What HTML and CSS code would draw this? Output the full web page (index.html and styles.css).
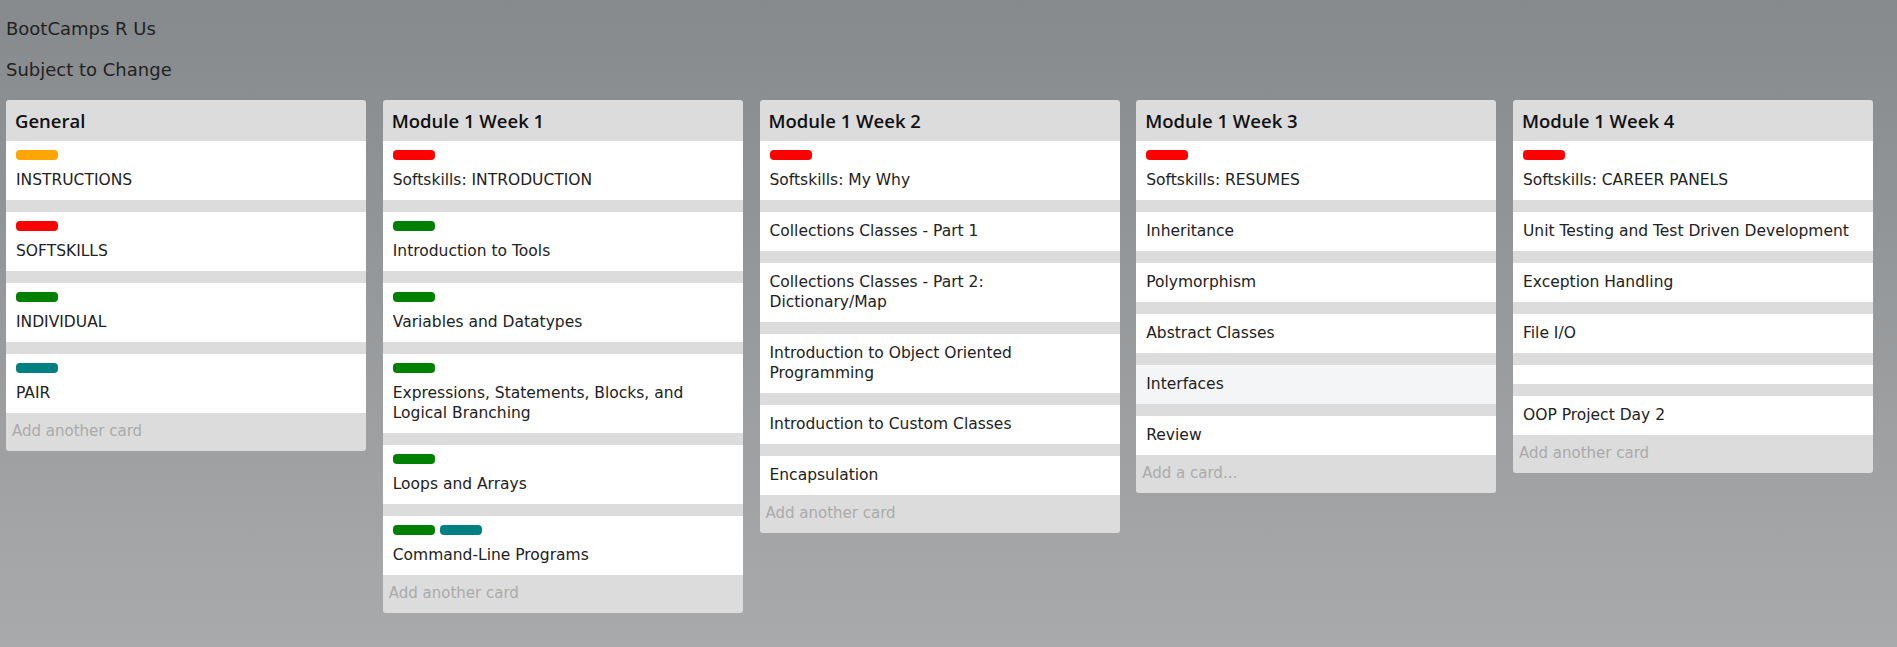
FILE: index.html
```html
<!DOCTYPE html>
<html>
<head>
<meta charset="utf-8">
<title>BootCamps R Us</title>
<link rel="stylesheet" href="styles.css">
</head>
<body>
<div class="page">
  <div class="board-title">BootCamps R Us</div>
  <div class="board-sub">Subject to Change</div>
  <div class="lists">
    <section class="list">
      <h2 class="list-head">General</h2>
      <div class="cards">
        <div class="card"><div class="labels"><span class="label orange"></span></div><div class="card-text">INSTRUCTIONS</div></div>
        <div class="card"><div class="labels"><span class="label red"></span></div><div class="card-text">SOFTSKILLS</div></div>
        <div class="card"><div class="labels"><span class="label green"></span></div><div class="card-text">INDIVIDUAL</div></div>
        <div class="card"><div class="labels"><span class="label teal"></span></div><div class="card-text">PAIR</div></div>
      </div>
      <div class="add">Add another card</div>
    </section>
    <section class="list">
      <h2 class="list-head">Module 1 Week 1</h2>
      <div class="cards">
        <div class="card"><div class="labels"><span class="label red"></span></div><div class="card-text">Softskills: INTRODUCTION</div></div>
        <div class="card"><div class="labels"><span class="label green"></span></div><div class="card-text">Introduction to Tools</div></div>
        <div class="card"><div class="labels"><span class="label green"></span></div><div class="card-text">Variables and Datatypes</div></div>
        <div class="card"><div class="labels"><span class="label green"></span></div><div class="card-text">Expressions, Statements, Blocks, and Logical Branching</div></div>
        <div class="card"><div class="labels"><span class="label green"></span></div><div class="card-text">Loops and Arrays</div></div>
        <div class="card"><div class="labels"><span class="label green"></span><span class="label teal"></span></div><div class="card-text">Command-Line Programs</div></div>
      </div>
      <div class="add">Add another card</div>
    </section>
    <section class="list">
      <h2 class="list-head">Module 1 Week 2</h2>
      <div class="cards">
        <div class="card"><div class="labels"><span class="label red"></span></div><div class="card-text">Softskills: My Why</div></div>
        <div class="card"><div class="card-text">Collections Classes - Part 1</div></div>
        <div class="card"><div class="card-text">Collections Classes - Part 2: Dictionary/Map</div></div>
        <div class="card"><div class="card-text">Introduction to Object Oriented Programming</div></div>
        <div class="card"><div class="card-text">Introduction to Custom Classes</div></div>
        <div class="card"><div class="card-text">Encapsulation</div></div>
      </div>
      <div class="add">Add another card</div>
    </section>
    <section class="list">
      <h2 class="list-head">Module 1 Week 3</h2>
      <div class="cards">
        <div class="card"><div class="labels"><span class="label red"></span></div><div class="card-text">Softskills: RESUMES</div></div>
        <div class="card"><div class="card-text">Inheritance</div></div>
        <div class="card"><div class="card-text">Polymorphism</div></div>
        <div class="card"><div class="card-text">Abstract Classes</div></div>
        <div class="card hover"><div class="card-text">Interfaces</div></div>
        <div class="card"><div class="card-text">Review</div></div>
      </div>
      <div class="add">Add a card...</div>
    </section>
    <section class="list">
      <h2 class="list-head">Module 1 Week 4</h2>
      <div class="cards">
        <div class="card"><div class="labels"><span class="label red"></span></div><div class="card-text">Softskills: CAREER PANELS</div></div>
        <div class="card"><div class="card-text">Unit Testing and Test Driven Development</div></div>
        <div class="card"><div class="card-text">Exception Handling</div></div>
        <div class="card"><div class="card-text">File I/O</div></div>
        <div class="card empty"></div>
        <div class="card"><div class="card-text">OOP Project Day 2</div></div>
      </div>
      <div class="add">Add another card</div>
    </section>
  </div>
</div>
</body>
</html>
```
FILE: styles.css
```css
html, body {
  margin: 0;
  padding: 0;
  height: 100%;
}
body {
  background: linear-gradient(to bottom, #868a8d 0%, #a9aaab 100%);
  font-family: "DejaVu Sans", sans-serif;
  color: #222;
}
.page {
  padding: 17px 6px 0 6px;
}
.board-title,
.board-sub {
  font-size: 18px;
  line-height: 24px;
  color: #222;
}
.board-sub {
  margin-top: 17px;
}
.lists {
  margin-top: 18px;
  display: grid;
  grid-template-columns: repeat(5, 360px);
  column-gap: 16.75px;
  align-items: start;
}
.list {
  background: #dcdcdc;
  border-radius: 3px;
  overflow: hidden;
}
.list-head {
  margin: 0;
  height: 41px;
  box-sizing: border-box;
  padding: 0 9px;
  display: flex;
  align-items: center;
  font-family: "Open Sans", sans-serif;
  font-size: 18.5px;
  font-weight: 600;
  color: #111;
}
.cards {
  display: flex;
  flex-direction: column;
  gap: 12px;
}
.card {
  background: #fff;
  padding: 9px 16px 10px 10px;
}
.card.hover {
  background: #f4f5f7;
}
.card.empty {
  height: 0;
}
.labels {
  display: flex;
  gap: 5px;
  margin-bottom: 10px;
}
.label {
  display: block;
  width: 42px;
  height: 10px;
  border-radius: 4px;
}
.label.orange { background: #ffa500; }
.label.red { background: #ff0000; }
.label.green { background: #008000; }
.label.teal { background: #008080; }
.card-text {
  font-size: 15.5px;
  line-height: 20px;
  color: #222;
}
.add {
  height: 38px;
  box-sizing: border-box;
  padding: 0 6px 2px 6px;
  display: flex;
  align-items: center;
  font-size: 15px;
  color: #aaa;
}
```
